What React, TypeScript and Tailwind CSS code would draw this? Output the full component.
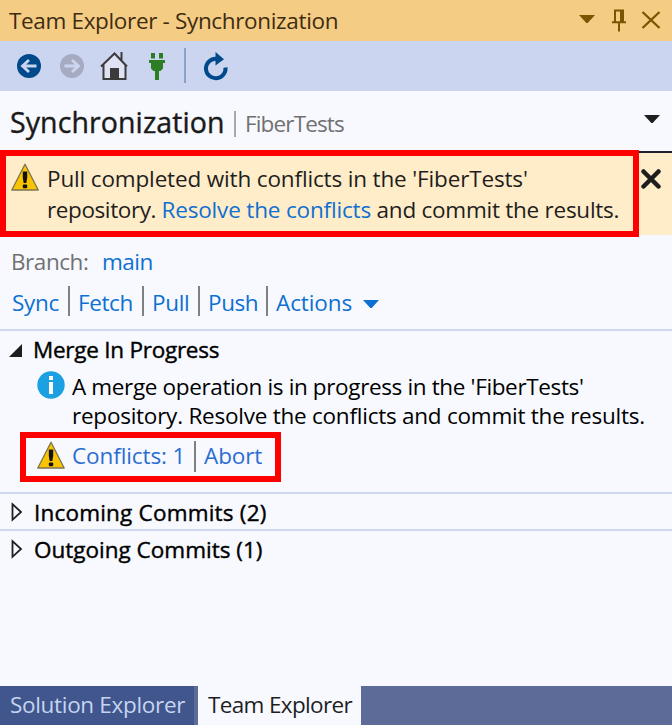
import React from "react";

function Caret({ className }: { className: string }) {
  return (
    <svg viewBox="0 0 16 8" className={`h-[8px] w-[16px] shrink-0 ${className}`}>
      <path d="M0 0h16L8.700 8H7.300z" fill="currentColor" />
    </svg>
  );
}

function Warning() {
  return (
    <svg viewBox="0 0 28 28" className="h-[28px] w-[28px] shrink-0">
      <path d="M14 1.200 27.200 27H.8z" fill="#fac400" stroke="#7d7350" strokeWidth="1.300" strokeLinejoin="round" />
      <path d="M11.800 8.500h4.400V15l-.9 5h-2.600l-.9-5z" fill="#111" />
      <rect x="11.800" y="21.500" width="4.400" height="3.700" rx="1" fill="#111" />
    </svg>
  );
}

function Info() {
  return (
    <svg viewBox="0 0 28 28" className="h-[28px] w-[28px] shrink-0">
      <circle cx="14" cy="14" r="13.700" fill="#1ba1e2" />
      <path d="M12 5h4v4h-4zM12 11h4v12h-4z" fill="#fff" />
    </svg>
  );
}

function ArrowCircle({ className, flip }: { className: string; flip?: boolean }) {
  return (
    <svg viewBox="0 0 24 24" className={`h-[24px] w-[24px] shrink-0 ${className}`}>
      <circle cx="12" cy="12" r="12" fill="currentColor" />
      <path
        d={flip ? "M4.500 12H18M12 6l6.500 6-6.500 6" : "M19.500 12H6M12 6l-6.500 6 6.500 6"}
        fill="none"
        stroke="#ccd5f0"
        strokeWidth="2.800"
      />
    </svg>
  );
}

function Bar({ className }: { className: string }) {
  return <span className={`w-[2px] shrink-0 bg-[#808080] ${className}`} />;
}

function Section({ title, tracking }: { title: string; tracking: string }) {
  return (
    <div className="flex h-[37px] items-start border-t-2 border-[#d0d8f0] pl-[11px]">
      <svg viewBox="0 0 12 20" className="mt-[8px] h-[20px] w-[12px] shrink-0">
        <path d="M1.500 2.200 10 10l-8.500 7.800z" fill="none" stroke="#1e1e1e" strokeWidth="1.800" />
      </svg>
      <span className={`ml-[11px] mt-[3px] leading-[32px] text-black [-webkit-text-stroke:0.400px_black] ${tracking}`}>{title}</span>
    </div>
  );
}

export default function App() {
  return (
    <div className="flex h-[725px] w-[672px] flex-col overflow-hidden whitespace-nowrap bg-[#f7f9fe] font-['Open_Sans',sans-serif] text-[22.5px] text-[#1e1e1e]">
      <header className="flex h-[41px] shrink-0 items-start bg-[#f5cc84] pl-[9px] text-[#3d2c12]">
        <span className="mt-[5px] leading-[32px] tracking-[-0.34px]">Team Explorer - Synchronization</span>
        <div className="ml-auto flex pr-[11px] text-[#7a5600]">
          <Caret className="mt-[15px]" />
          <svg viewBox="0 0 16 24" className="ml-[16px] mt-[9px] h-[24px] w-[16px]">
            <path d="M3 1.500h10M4 1v12M12 1v12M1 13.200h14M8 13v9.500" fill="none" stroke="currentColor" strokeWidth="2" />
            <path d="M9 1h4v12H9z" fill="currentColor" />
          </svg>
          <svg viewBox="0 0 20 18" className="ml-[14px] mt-[11px] h-[18px] w-[20px]">
            <path d="m1.500 1 17 16m0-16-17 16" fill="none" stroke="currentColor" strokeWidth="2.400" />
          </svg>
        </div>
      </header>

      <nav className="flex h-[50px] shrink-0 items-start bg-[#ccd5f0] pl-[17px] pt-[7px]">
        <ArrowCircle className="mt-[6px] text-[#00498b]" />
        <ArrowCircle flip className="ml-[19px] mt-[6px] text-[#a6abc2]" />
        <svg viewBox="0 0 28 30" className="ml-[16px] mt-[3px] h-[30px] w-[28px]">
          <path d="M4 13v15.500h21V13L14.500 3z" fill="#dfe2f3" />
          <path d="M1 15.500 14.500 2.500 27 15.500M3.500 13.500V28h22V13.500M21.500 9V1" fill="none" stroke="#3b3b3b" strokeWidth="2" />
          <path d="M10 17h9v11h-9z" fill="#3b3b3b" />
        </svg>
        <svg viewBox="0 0 18 28" className="ml-[20px] mt-[5px] h-[28px] w-[18px]">
          <path d="M3 0h4v5.500H3zM11 0h4v5.500h-4zM1 7h16v3h-2v5.500L12.500 18H11v9H7v-9H5.500L3 15.500V10H1z" fill="#2d7d24" />
        </svg>
        <span className="ml-[18px] h-[35px] w-[2px] bg-[#8da0c9]" />
        <svg viewBox="0 0 26 29" className="ml-[17px] mt-[4px] h-[29px] w-[26px]">
          <path d="M22.500 15.500A9.800 9.800 0 1 1 12.500 6.700h4" fill="none" stroke="#00498b" strokeWidth="4" />
          <path d="M12.500 0 21 7.200l-8.500 6.300z" fill="#00498b" />
        </svg>
      </nav>

      <div className="flex h-[59px] shrink-0 items-start pl-[10px]">
        <h1 className="mt-[11px] w-[224px] text-[28.5px] leading-[40px] tracking-[0.1px] text-[#1a1a1a] [-webkit-text-stroke:0.400px_#1a1a1a]">Synchronization</h1>
        <span className="mt-[20px] h-[26px] w-[2px] bg-[#a8a8a8]" />
        <span className="ml-[9px] mt-[17px] leading-[32px] tracking-[-0.85px] text-[#717171]">FiberTests</span>
        <Caret className="ml-auto mr-[12px] mt-[24px] text-[#1e1e1e]" />
      </div>

      <div className="flex h-[87px] shrink-0 items-start">
        <div className="flex h-[87px] w-[639px] border-6 border-[#f00] bg-[#ffecc8] pl-[5px] pt-[7px]">
          <Warning />
          <p className="ml-[8px] leading-[31px]">
            <span className="block tracking-[-0.15px]">Pull completed with conflicts in the 'FiberTests'</span>
            <span className="block tracking-[-0.25px]">
              <span className="tracking-[-0.4px]">repository. </span>
              <a className="tracking-[-0.17px] text-[#0e70d1]">Resolve the conflicts</a> and commit the results.
            </span>
          </p>
        </div>
        <div className="mt-[1px] h-[84px] flex-1 border-t-2 border-[#1e1e2e] bg-[#ffecc8] pl-[2px] pt-[16px]">
          <svg viewBox="0 0 20 20" className="h-[20px] w-[20px]">
            <path d="m2.500 2.500 15 15m0-15-15 15" stroke="#1e1e1e" strokeWidth="4.500" strokeLinecap="round" />
          </svg>
        </div>
      </div>

      <div className="flex h-[41px] shrink-0 items-start pl-[11px] pt-[9px] leading-[32px]">
        <span className="w-[89px] tracking-[-0.45px] text-[#717171]">Branch:</span>
        <a className="ml-[2px] tracking-[-0.5px] text-[#0e70d1]">main</a>
      </div>
      <div className="flex h-[51px] shrink-0 items-start pl-[11px] pt-[9px] leading-[32px] text-[#0e70d1]">
        <a className="w-[57px] pl-[1px] tracking-[-0.3px]">Sync</a>
        <Bar className="mt-[-1px] h-[30px]" />
        <a className="w-[72px] pl-[8px] tracking-[-0.4px]">Fetch</a>
        <Bar className="mt-[-1px] h-[30px]" />
        <a className="w-[54px] pl-[8px] tracking-[-0.3px]">Pull</a>
        <Bar className="mt-[-1px] h-[30px]" />
        <a className="w-[66px] pl-[8px] tracking-[-0.4px]">Push</a>
        <Bar className="mt-[-1px] h-[30px]" />
        <a className="w-[95px] pl-[8px] tracking-[-0.1px]">Actions</a>
        <Caret className="mt-[13px]" />
      </div>

      <section className="flex h-[163px] shrink-0 flex-col border-t-2 border-[#d0d8f0]">
        <div className="flex h-[38px] items-start pl-[9px]">
          <svg viewBox="0 0 13 13" className="mt-[13px] h-[13px] w-[13px]">
            <path d="M13 0v13H0z" fill="#1e1e1e" />
          </svg>
          <span className="ml-[11px] mt-[3px] leading-[32px] tracking-[-0.25px] text-black [-webkit-text-stroke:0.400px_black]">Merge In Progress</span>
        </div>
        <div className="flex h-[63px] items-start pl-[37px] pt-[2px] text-black">
          <Info />
          <p className="ml-[7px] mt-[1px] leading-[29px]">
            <span className="block tracking-[-0.36px]">A merge operation is in progress in the 'FiberTests'</span>
            <span className="block tracking-[-0.24px]">repository. Resolve the conflicts and commit the results.</span>
          </p>
        </div>
        <div className="ml-[20px] flex h-[50px] w-[261px] items-start border-6 border-[#f00] pl-[11px] pt-[3px] leading-[32px] text-[#2a6dd0]">
          <Warning />
          <a className="ml-[7px] mt-[-1px] w-[122px] tracking-[-0.1px]">Conflicts: 1</a>
          <Bar className="h-[31px]" />
          <a className="ml-[8px] mt-[-1px] tracking-[-0.1px]">Abort</a>
        </div>
      </section>
      <Section title="Incoming Commits (2)" tracking="tracking-[0.2px]" />
      <Section title="Outgoing Commits (1)" tracking="tracking-[0px]" />

      <footer className="mt-auto flex h-[39px] shrink-0 bg-[#5d6b99] leading-[32px]">
        <div className="w-[198px] border-r-4 border-[#5d6b99] bg-[#40568d] pl-[10px] pt-[3px] tracking-[-0.32px] text-[#c6d5f0]">Solution Explorer</div>
        <div className="w-[163px] bg-[#f7f9fe] pl-[10px] pt-[3px] tracking-[-0.65px]">Team Explorer</div>
      </footer>
    </div>
  );
}
